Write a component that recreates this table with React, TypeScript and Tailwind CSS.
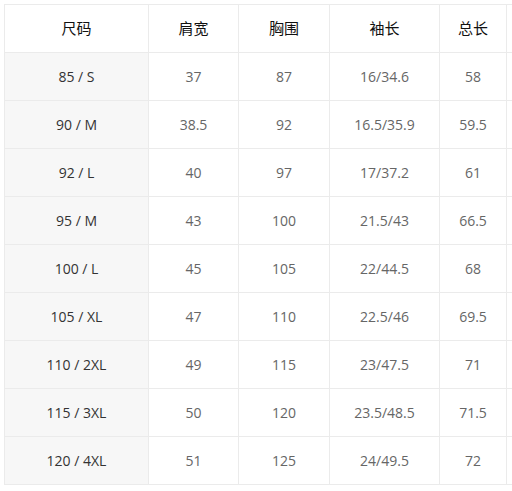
const headers = ['尺码', '肩宽', '胸围', '袖长', '总长'];

const rows = [
  ['85 / S', '37', '87', '16/34.6', '58'],
  ['90 / M', '38.5', '92', '16.5/35.9', '59.5'],
  ['92 / L', '40', '97', '17/37.2', '61'],
  ['95 / M', '43', '100', '21.5/43', '66.5'],
  ['100 / L', '45', '105', '22/44.5', '68'],
  ['105 / XL', '47', '110', '22.5/46', '69.5'],
  ['110 / 2XL', '49', '115', '23/47.5', '71'],
  ['115 / 3XL', '50', '120', '23.5/48.5', '71.5'],
  ['120 / 4XL', '51', '125', '24/49.5', '72'],
];

const colWidths = ['w-[144px]', 'w-[90px]', 'w-[91px]', 'w-[110px]', 'w-[67px]', 'w-[60px]'];

export default function App() {
  return (
    <div
      className="w-[512px] h-[491px] overflow-hidden bg-white pt-1 pl-1"
      style={{ fontFamily: '"Open Sans", "Noto Sans CJK SC", sans-serif' }}
    >
      <table className="table-fixed border-collapse w-[562px] text-[14px]">
        <colgroup>
          {colWidths.map((w, i) => (
            <col key={i} className={w} />
          ))}
        </colgroup>
        <thead>
          <tr className="h-[48px]">
            {headers.map((h) => (
              <th key={h} className="border border-[#ebebeb] font-normal text-[15px] text-[#111] text-center p-0">
                {h}
              </th>
            ))}
            <th className="border border-[#ebebeb] p-0"></th>
          </tr>
        </thead>
        <tbody>
          {rows.map((r) => (
            <tr key={r[0]} className="h-[48px]">
              {r.map((c, i) => (
                <td
                  key={i}
                  className={
                    i === 0
                      ? 'border border-[#ebebeb] bg-[#f7f7f7] text-[#333] text-center p-0'
                      : 'border border-[#ebebeb] text-[#666] text-center p-0'
                  }
                >
                  {c}
                </td>
              ))}
              <td className="border border-[#ebebeb] p-0"></td>
            </tr>
          ))}
        </tbody>
      </table>
    </div>
  );
}
